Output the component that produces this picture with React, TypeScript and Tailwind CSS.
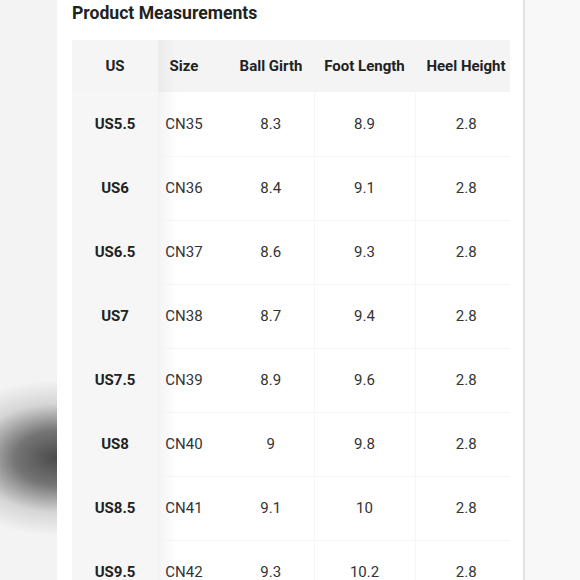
import React from "react";

const rows = [
  ["US5.5", "CN35", "8.3", "8.9", "2.8"],
  ["US6", "CN36", "8.4", "9.1", "2.8"],
  ["US6.5", "CN37", "8.6", "9.3", "2.8"],
  ["US7", "CN38", "8.7", "9.4", "2.8"],
  ["US7.5", "CN39", "8.9", "9.6", "2.8"],
  ["US8", "CN40", "9", "9.8", "2.8"],
  ["US8.5", "CN41", "9.1", "10", "2.8"],
  ["US9.5", "CN42", "9.3", "10.2", "2.8"],
];

export default function App() {
  return (
    <div
      className="flex h-[580px] w-[580px] overflow-hidden bg-[#f4f4f4]"
      style={{ fontFamily: "Roboto, 'Liberation Sans', sans-serif" }}
    >
      <div className="h-full w-[57px] shrink-0 bg-[#f3f3f3] bg-[radial-gradient(ellipse_120px_78px_at_100%_458px,#4a4a4a_0%,rgba(85,85,85,0.8)_35%,rgba(160,160,160,0.35)_70%,rgba(243,243,243,0)_100%)]" />
      <div className="h-full w-[466px] shrink-0 bg-white pl-[15px]">
        <div className="pt-[1px] text-[17.6px] font-bold leading-[24px] text-[#222]">
          Product Measurements
        </div>
        <div className="mt-[15px] w-[438px] overflow-hidden">
          <table className="w-[445px] table-fixed border-collapse text-[15px] text-[#333]">
            <colgroup>
              <col className="w-[86px]" />
              <col className="w-[70px]" />
              <col className="w-[86px]" />
              <col className="w-[101px]" />
              <col className="w-[102px]" />
            </colgroup>
            <thead>
              <tr className="h-[52px] bg-[#f4f4f4] font-bold text-[#222]">
                <th className="bg-[#f5f5f5] text-center font-bold">US</th>
                <th className="bg-[linear-gradient(to_right,#ebebeb,#f4f4f4_18px)] pr-[18px] text-center font-bold">Size</th>
                <th className="text-center font-bold">Ball Girth</th>
                <th className="text-center font-bold">Foot Length</th>
                <th className="text-center font-bold">Heel Height</th>
              </tr>
            </thead>
            <tbody>
              {rows.map((r) => (
                <tr key={r[0]} className="h-[64px] border-b border-[#f4f4f4]">
                  <td className="bg-[#f6f6f6] text-center font-bold text-[#222]">{r[0]}</td>
                  <td className="bg-[linear-gradient(to_right,#f3f3f3,#ffffff_20px)] pr-[18px] text-center">{r[1]}</td>
                  <td className="border-r border-[#f5f5f5] text-center">{r[2]}</td>
                  <td className="border-r border-[#f5f5f5] text-center">{r[3]}</td>
                  <td className="text-center">{r[4]}</td>
                </tr>
              ))}
            </tbody>
          </table>
        </div>
      </div>
      <div className="h-full w-[2px] shrink-0 bg-[#e3e3e3]" />
      <div className="h-full flex-1 bg-[#f8f8f8]" />
    </div>
  );
}
